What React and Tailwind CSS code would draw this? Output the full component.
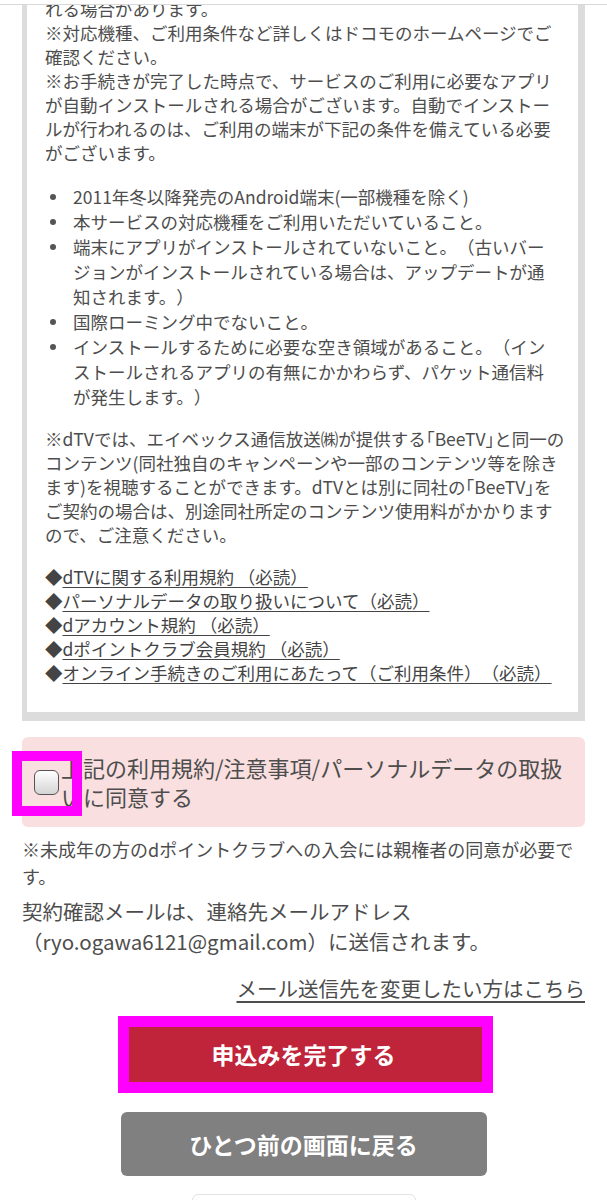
const conditions = [
  '2011年冬以降発売のAndroid端末(一部機種を除く)',
  '本サービスの対応機種をご利用いただいていること。',
  '端末にアプリがインストールされていないこと。（古いバージョンがインストールされている場合は、アップデートが通知されます。）',
  '国際ローミング中でないこと。',
  'インストールするために必要な空き領域があること。（インストールされるアプリの有無にかかわらず、パケット通信料が発生します。）',
];

const terms = [
  'dTVに関する利用規約 （必読）',
  'パーソナルデータの取り扱いについて（必読）',
  'dアカウント規約 （必読）',
  'dポイントクラブ会員規約 （必読）',
  'オンライン手続きのご利用にあたって（ご利用条件）（必読）',
];

// 「BeeTV」の括弧は半角幅で詰める
const BeeTV = () => (
  <span>
    <span className="[font-feature-settings:'halt']">「</span>BeeTV
    <span className="[font-feature-settings:'halt']">」</span>
  </span>
);

export default function App() {
  return (
    <div className="relative h-[1200px] w-[607px] overflow-hidden bg-white font-['Noto_Sans_CJK_JP',sans-serif] text-[#4d4d4d] [text-spacing-trim:space-all]">
      <div className="px-[22px]">
        {/* 注意事項ボックス */}
        <div className="-mt-[3px] border-l-[5px] border-r-[7px] border-b-[9px] border-[#dcdcdc] bg-white pl-[18px] pr-[21px] pb-[27px] text-[17.5px] leading-[24px]">
          <p className="whitespace-nowrap">
            れる場合があります。
            <br />
            ※対応機種、ご利用条件など詳しくはドコモのホームページでご
            <br />
            確認ください。
            <br />
            ※お手続きが完了した時点で、サービスのご利用に必要なアプリ
            <br />
            が自動インストールされる場合がございます。自動でインストー
            <br />
            ルが行われるのは、ご利用の端末が下記の条件を備えている必要
            <br />
            がございます。
          </p>

          <ul className="mt-[19px] leading-[25px]">
            {conditions.map((c) => (
              <li key={c} className="flex">
                <span className="w-[28px] shrink-0 pl-[5px] pt-[10px]">
                  <span className="block h-[6px] w-[6px] rounded-full bg-[#555]" />
                </span>
                <span>{c}</span>
              </li>
            ))}
          </ul>

          <p className="mt-[18px] whitespace-nowrap">
            ※dTVでは、エイベックス通信放送㈱が提供する<BeeTV />と同一の
            <br />
            コンテンツ(同社独自のキャンペーンや一部のコンテンツ等を除き
            <br />
            ます)を視聴することができます。dTVとは別に同社の<BeeTV />を
            <br />
            ご契約の場合は、別途同社所定のコンテンツ使用料がかかります
            <br />
            ので、ご注意ください。
          </p>

          <div className="mt-[18px] text-[#444]">
            {terms.map((t) => (
              <p key={t} className="whitespace-nowrap">
                ◆<span className="underline underline-offset-[3px]">{t}</span>
              </p>
            ))}
          </div>
        </div>

        {/* 同意チェック */}
        <div className="relative mt-[16px] flex items-center rounded-[6px] bg-[#f9dfdf] py-[16px] pl-[12px] pr-[13px]">
          <span className="h-[25px] w-[25px] shrink-0 rounded-[6px] border-[1.5px] border-[#555] bg-linear-to-b from-white to-[#d4d4d4]" />
          <p className="ml-[2px] text-[22px] leading-[29px]">
            上記の利用規約/注意事項/パーソナルデータの取扱いに同意する
          </p>
          <span className="absolute left-[-10px] top-[14px] h-[65px] w-[70px] border-[10px] border-[#ff00ff]" />
        </div>

        <p className="mt-[9px] text-[18px] leading-[27px]">
          ※未成年の方のdポイントクラブへの入会には親権者の同意が必要です。
        </p>

        <p className="mt-[6px] text-[20.5px] leading-[30px]">
          契約確認メールは、連絡先メールアドレス（ryo.ogawa6121@gmail.com）に送信されます。
        </p>

        <p className="mt-[17px] text-right text-[20.5px] leading-[30px]">
          <span className="underline underline-offset-[4px]">メール送信先を変更したい方はこちら</span>
        </p>

        <button className="relative mx-auto mt-[19px] flex h-[64px] w-[366px] items-center justify-center rounded-[6px] bg-[#c0243a] text-[23px] font-bold text-white">
          申込みを完了する
          <span className="absolute left-[-3px] top-[-6px] h-[77px] w-[375px] border-[11px] border-[#ff00ff]" />
        </button>

        <button className="mx-auto mt-[26px] flex h-[64px] w-[366px] items-center justify-center rounded-[6px] bg-[#808080] text-[23px] font-bold text-white">
          ひとつ前の画面に戻る
        </button>

        <div className="mx-auto mt-[18px] h-[20px] w-[224px] rounded-t-[6px] border border-[#e2e2e2]" />
      </div>

      <div className="absolute left-0 right-0 top-0 h-[5px] border-b border-[#d9d9d9] bg-white" />
    </div>
  );
}
